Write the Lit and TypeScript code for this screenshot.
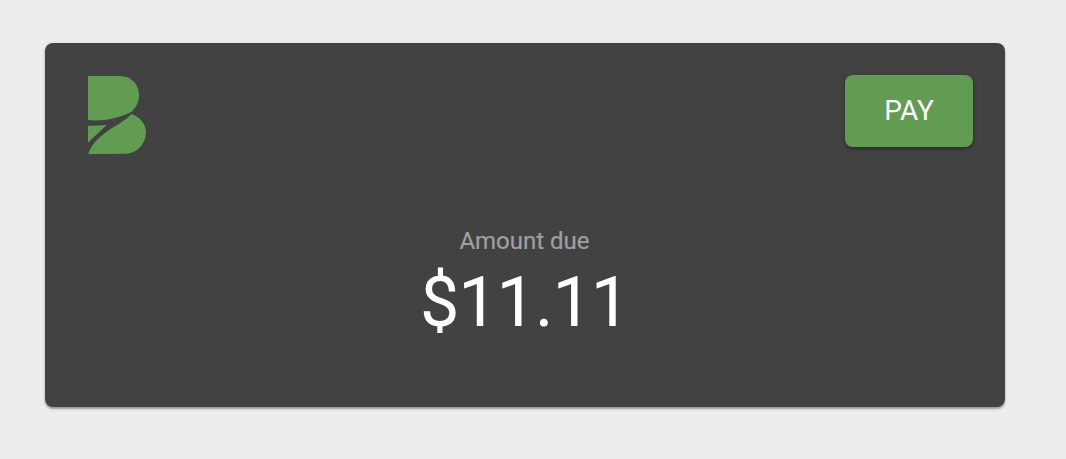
import { LitElement, html, css } from "lit";
import { customElement } from "lit/decorators.js";

@customElement("app-root")
export class AppRoot extends LitElement {
  static styles = css`
    :host {
      display: block;
      width: 1066px;
      height: 459px;
      background: #ededed;
      font-family: Roboto, "Liberation Sans", sans-serif;
      overflow: hidden;
    }
    .page {
      padding: 43px 61px 0 45px;
    }
    .card {
      box-sizing: border-box;
      width: 960px;
      height: 364px;
      background: #424242;
      border-radius: 8px;
      box-shadow: 0 2px 2px rgba(0, 0, 0, 0.3), 0 1px 5px rgba(0, 0, 0, 0.08);
      padding: 32px 32px 0 43px;
      display: flex;
      flex-direction: column;
    }
    .top {
      display: flex;
      justify-content: space-between;
      align-items: flex-start;
      height: 72px;
    }
    .logo {
      display: block;
      width: 60px;
      height: 81px;
    }
    .pay {
      width: 128px;
      height: 72px;
      border: none;
      padding: 0;
      border-radius: 8px;
      background: #629c53;
      color: #fff;
      font: 400 28px/72px Roboto, "Liberation Sans", sans-serif;
      box-shadow: 0 2px 4px rgba(0, 0, 0, 0.35);
    }
    .due {
      margin: 80px 12px 0 0;
      text-align: center;
    }
    .label {
      color: #a0a0a0;
      font-size: 24px;
      line-height: 28px;
      -webkit-text-stroke: 0.2px #a0a0a0;
    }
    .amount {
      color: #fff;
      font-size: 70px;
      line-height: 82px;
      letter-spacing: -1px;
      margin-top: 6px;
    }
  `;

  render() {
    return html`
      <div class="page">
        <div class="card">
          <div class="top">
            <svg class="logo" viewBox="54 45 180 243" fill="#629c53" aria-label="logo">
              <path d="M54 48H150C185 48 207 75 207 105C207 125 198 143 185 155C145 175 95 185 54 180Z" />
              <path d="M54 197C72 198 92 197 110 194C90 215 70 230 54 248Z" />
              <path d="M55 282C65 250 95 225 125 205C148 192 168 178 185 162C210 172 228 192 228 217C228 252 200 280 170 281Z" />
            </svg>
            <button class="pay">PAY</button>
          </div>
          <div class="due">
            <div class="label">Amount due</div>
            <div class="amount">$11.11</div>
          </div>
        </div>
      </div>
    `;
  }
}
